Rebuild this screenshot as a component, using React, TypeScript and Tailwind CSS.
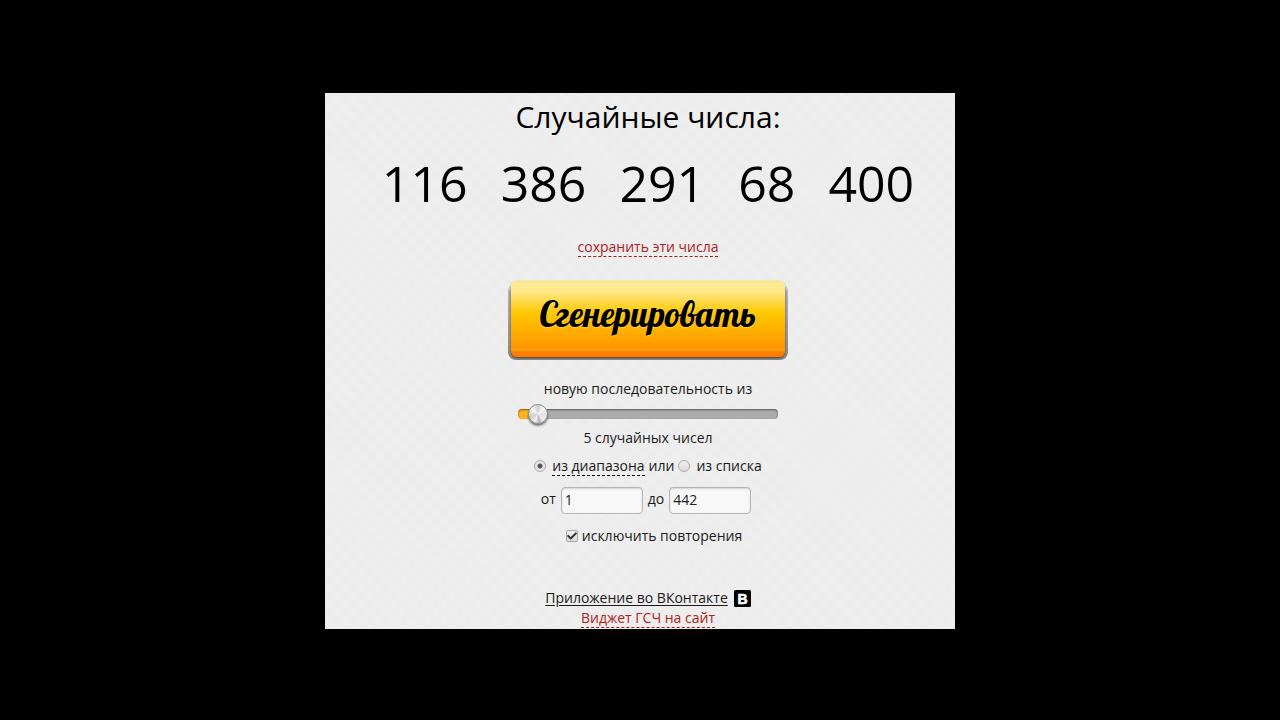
import { useCallback, useMemo, useState } from "react";
import { FaCheck } from "react-icons/fa";
import clsx from "clsx";

type Source = "range" | "list";

const MIN_COUNT = 1;
const MAX_COUNT = 100;
const THUMB_SIZE = 20;

const NUMBERS = [116, 386, 291, 68, 400];

const LINK_STYLES =
  "border-b border-dashed border-[#b01818] leading-[19px] text-[#b02020]";

const RADIO_STYLES =
  "size-3 shrink-0 appearance-none rounded-full border border-[#aaaaaa] bg-linear-to-b from-[#f0f0f0] to-[#dadada] checked:bg-[radial-gradient(circle,#555555_0_2px,#e6e6e6_3px)]";

const FIELD_STYLES =
  "h-[27px] w-[82px] rounded border border-[#b4b4b4] bg-[#f8f8f8] px-[3px] pb-0.5 text-sm text-[#222222] shadow-[inset_0_1px_2px_rgba(0,0,0,0.15)] outline-none";

// Generate button
const GenerateButton = () => (
  <button
    type="button"
    className="h-[79px] w-[280px] rounded-lg bg-linear-to-b from-transparent from-6% via-[#b0b0b0] via-14% to-[#8c8884] px-[3px] pb-[3px]"
  >
    <span className="flex h-full items-center justify-center rounded-md bg-[linear-gradient(to_bottom,#ffe566_0,#ffec9c_3px,#ffe680_12px,#ffc800_32px,#ff9700_66px,#ffa010_69px,#ff8000_71px,#ff7a00_100%)] pb-2.5 font-['Lobster','Liberation_Serif',serif] text-[35px] leading-[44px] text-black shadow-[0_1px_2px_rgba(60,40,20,0.8)] [text-shadow:0_1px_2px_rgba(255,230,100,0.6)]">
      Сгенерировать
    </span>
  </button>
);

type CountSliderProps = {
  count: number;
  onChange: (count: number) => void;
};

const CountSlider = ({ count, onChange }: CountSliderProps) => {
  // The filled part ends under the middle of the thumb
  const trackStyle = useMemo(() => {
    const ratio = (count - MIN_COUNT) / (MAX_COUNT - MIN_COUNT);
    const fill = `calc(${THUMB_SIZE / 2}px + (100% - ${THUMB_SIZE}px) * ${ratio})`;
    return {
      backgroundImage: `linear-gradient(to right, #ffb224 ${fill}, #acacac ${fill})`,
    };
  }, [count]);

  return (
    <input
      type="range"
      aria-label="Количество случайных чисел"
      min={MIN_COUNT}
      max={MAX_COUNT}
      value={count}
      onChange={(e) => onChange(Number(e.target.value))}
      style={trackStyle}
      className="block h-[10px] w-[260px] appearance-none rounded-[4px] shadow-[inset_0_1px_2px_rgba(0,0,0,0.5)] [&::-webkit-slider-thumb]:size-5 [&::-webkit-slider-thumb]:appearance-none [&::-webkit-slider-thumb]:rounded-full [&::-webkit-slider-thumb]:border [&::-webkit-slider-thumb]:border-[#8a8a8a] [&::-webkit-slider-thumb]:bg-[conic-gradient(#d0d0d0,#f4f4f4_40deg,#e4e4e4_100deg,#f0f0f0_140deg,#b8b0b0_170deg,#f0f0f0_200deg,#cccccc_250deg,#f6f6f6_310deg,#d0d0d0)] [&::-webkit-slider-thumb]:shadow-[0_2px_2px_rgba(0,0,0,0.5)]"
    />
  );
};

const VkLogo = () => (
  <svg viewBox="0 0 17 17" className="size-[17px]" aria-hidden="true">
    <rect width="17" height="17" rx="1.5" fill="#000" />
    <text
      x="8.5"
      y="13.5"
      textAnchor="middle"
      fontFamily="Liberation Sans, sans-serif"
      fontSize="14"
      fontWeight="700"
      fill="#fff"
      stroke="#fff"
      strokeWidth="0.6"
    >
      В
    </text>
  </svg>
);

const App = () => {
  const [count, setCount] = useState(5);
  const [source, setSource] = useState<Source>("range");
  const [from, setFrom] = useState("1");
  const [to, setTo] = useState("442");
  const [unique, setUnique] = useState(true);

  const handleUniqueChange = useCallback(() => {
    setUnique((prev) => !prev);
  }, []);

  return (
    <div className="flex min-h-screen items-center justify-center bg-black pt-0.5 font-['Open_Sans','Noto_Sans',sans-serif] text-sm leading-5 text-[#1a1a1a]">
      <main className="flex w-full max-w-[630px] flex-col items-center bg-[#ededed] bg-[repeating-linear-gradient(45deg,transparent_0_1px,rgba(255,255,255,0.2)_1px_2px),repeating-linear-gradient(135deg,transparent_0_1px,rgba(0,0,0,0.01)_1px_2px)] pt-1 pb-px pl-4">
        <h1 className="text-[30px] leading-10 text-black">Случайные числа:</h1>

        <ul className="mt-3 flex gap-[33px] text-[50px] leading-[68px] text-black">
          {NUMBERS.map((number) => (
            <li key={number}>{number}</li>
          ))}
        </ul>

        <a href="#save" className={clsx("mt-5", LINK_STYLES)}>
          сохранить эти числа
        </a>

        <div className="mt-6 flex">
          <GenerateButton />
        </div>

        <p className="mt-[19px]">новую последовательность из</p>
        <div className="mt-2.5">
          <CountSlider count={count} onChange={setCount} />
        </div>
        <p className="mt-[9px]">{count} случайных чисел</p>

        <div className="mt-2 flex items-center">
          <input
            id="source-range"
            type="radio"
            name="source"
            checked={source === "range"}
            onChange={() => setSource("range")}
            className={RADIO_STYLES}
          />
          <label
            htmlFor="source-range"
            className={clsx(
              "ml-1.5 leading-[19px]",
              source === "range" && "border-b border-dashed border-black"
            )}
          >
            из диапазона
          </label>
          <span className="mx-1">или</span>
          <input
            id="source-list"
            type="radio"
            name="source"
            checked={source === "list"}
            onChange={() => setSource("list")}
            className={RADIO_STYLES}
          />
          <label htmlFor="source-list" className="ml-1.5">
            из списка
          </label>
        </div>

        <div className="mt-[11px] mr-1 flex items-start gap-[5px] leading-6">
          <label htmlFor="from">от</label>
          <input
            id="from"
            type="text"
            value={from}
            onChange={(e) => setFrom(e.target.value)}
            className={FIELD_STYLES}
          />
          <label htmlFor="to">до</label>
          <input
            id="to"
            type="text"
            value={to}
            onChange={(e) => setTo(e.target.value)}
            className={FIELD_STYLES}
          />
        </div>

        <label className="mt-3 ml-3 flex items-center gap-1">
          <span className="grid place-items-center">
            <input
              type="checkbox"
              checked={unique}
              onChange={handleUniqueChange}
              className="col-start-1 row-start-1 size-3 appearance-none rounded-xs border border-[#aaaaaa] bg-linear-to-b from-[#f0f0f0] to-[#dadada]"
            />
            {unique && (
              <FaCheck className="pointer-events-none col-start-1 row-start-1 size-2.5 text-[#333333]" />
            )}
          </span>
          исключить повторения
        </label>

        <footer className="mt-[42px] flex flex-col items-center">
          <div className="flex items-center gap-1.5">
            <a href="#vk" className="underline underline-offset-2">
              Приложение во ВКонтакте
            </a>
            <VkLogo />
          </div>
          <a href="#widget" className={LINK_STYLES}>
            Виджет ГСЧ на сайт
          </a>
        </footer>
      </main>
    </div>
  );
};

export default App;
